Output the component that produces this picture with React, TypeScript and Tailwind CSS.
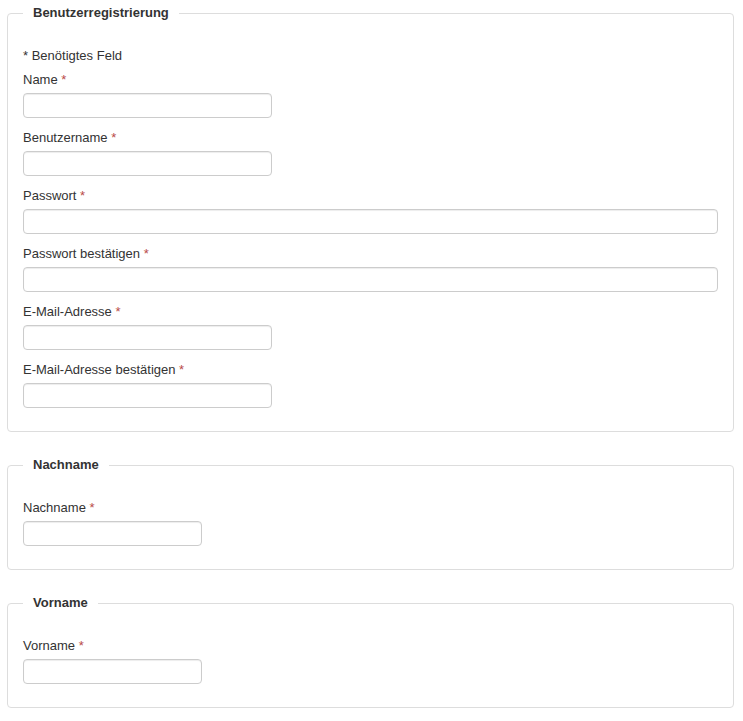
import React from "react";

type Field = {
  label: string;
  width: "short" | "full" | "narrow";
};

const registrationFields: Field[] = [
  { label: "Name", width: "short" },
  { label: "Benutzername", width: "short" },
  { label: "Passwort", width: "full" },
  { label: "Passwort bestätigen", width: "full" },
  { label: "E-Mail-Adresse", width: "short" },
  { label: "E-Mail-Adresse bestätigen", width: "short" },
];

function FormField({ field }: { field: Field }) {
  const widthClass =
    field.width === "full"
      ? "w-full"
      : field.width === "short"
      ? "w-[249px]"
      : "w-[179px]";

  return (
    <div className="mb-[11px]">
      <label className="block leading-[18px] mb-[4px]">
        {field.label} <span className="text-[#b94a48]">*</span>
      </label>
      <input
        type={field.label.startsWith("Passwort") ? "password" : "text"}
        className={`${widthClass} h-[25px] block bg-white border border-[#cccccc] rounded-[4px] px-[6px] shadow-[inset_0_1px_1px_rgba(0,0,0,0.075)] focus:outline-none`}
      />
    </div>
  );
}

function Section({
  title,
  children,
}: {
  title: string;
  children: React.ReactNode;
}) {
  return (
    <fieldset className="border border-[#dddddd] rounded-[4px] px-[15px] pt-[25px] pb-[12px] mb-[24px]">
      <legend className="px-[10px] font-bold leading-[18px] text-[#333333]">
        {title}
      </legend>
      {children}
    </fieldset>
  );
}

export default function App() {
  return (
    <div
      className="bg-white min-h-screen pl-[7px] pr-[9px] pt-[4px] text-[13px] text-[#333333]"
      style={{ fontFamily: '"Liberation Sans", Arial, sans-serif' }}
    >
      {/* user registration */}
      <Section title="Benutzerregistrierung">
        <p className="leading-[18px] mb-[6px]">* Benötigtes Feld</p>
        {registrationFields.map((field) => (
          <FormField key={field.label} field={field} />
        ))}
      </Section>

      {/* last name */}
      <Section title="Nachname">
        <FormField field={{ label: "Nachname", width: "narrow" }} />
      </Section>

      {/* first name */}
      <Section title="Vorname">
        <FormField field={{ label: "Vorname", width: "narrow" }} />
      </Section>
    </div>
  );
}
